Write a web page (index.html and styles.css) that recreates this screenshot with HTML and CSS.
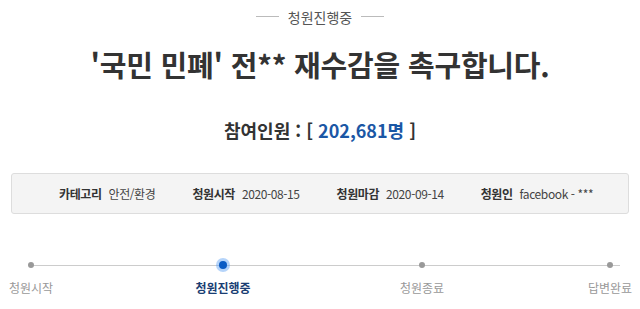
FILE: index.html
```html
<!DOCTYPE html>
<html lang="ko">
<head>
  <meta charset="UTF-8" />
  <meta name="viewport" content="width=device-width, initial-scale=1" />
  <title>청원진행중</title>
  <link rel="stylesheet" href="styles.css">
</head>
<body>
  <div class="petition">
    <div class="status"><span class="status-text">청원진행중</span></div>
    <h1 class="title">'국민 민폐' 전** 재수감을 촉구합니다.</h1>
    <h2 class="count">참여인원 : [ <span class="count-num">202,681명</span> ]</h2>

    <ul class="info">
      <li><strong>카테고리</strong> 안전/환경</li>
      <li><strong>청원시작</strong> 2020-08-15</li>
      <li><strong>청원마감</strong> 2020-09-14</li>
      <li><strong>청원인</strong> facebook - ***</li>
    </ul>

    <div class="progress">
      <div class="progress-line"></div>
      <div class="step">
        <span class="dot"></span>
        <span class="step-label">청원시작</span>
      </div>
      <div class="step active">
        <span class="dot"></span>
        <span class="step-label">청원진행중</span>
      </div>
      <div class="step">
        <span class="dot"></span>
        <span class="step-label">청원종료</span>
      </div>
      <div class="step">
        <span class="dot"></span>
        <span class="step-label">답변완료</span>
      </div>
    </div>
  </div>
</body>
</html>
```

FILE: styles.css
```css
* {
  box-sizing: border-box;
  margin: 0;
  padding: 0;
}
body, html {
  width: 100%;
  height: 100%;
  background-color: #fff;
  font-family: "Noto Sans CJK KR", "Noto Sans", sans-serif;
  color: #333;
  overflow: hidden;
}
.petition {
  padding: 0 11px;
}
.status {
  display: flex;
  justify-content: center;
  padding-top: 5px;
  height: 28px;
}
.status-text {
  display: flex;
  align-items: center;
  gap: 9px;
  font-size: 14px;
  line-height: 20px;
  color: #555;
}
.status-text::before,
.status-text::after {
  content: "";
  width: 23px;
  height: 1px;
  background-color: #bbb;
}
.title {
  text-align: center;
  font-size: 29px;
  font-weight: bold;
  line-height: 40px;
  margin-top: 16px;
  color: #333;
  letter-spacing: -0.2px;
}
.count {
  text-align: center;
  font-size: 18px;
  font-weight: bold;
  line-height: 26px;
  margin-top: 33px;
  color: #333;
}
.count-num {
  color: #1b57a5;
}
.info {
  list-style: none;
  display: flex;
  align-items: center;
  gap: 37px;
  height: 41px;
  margin-top: 30px;
  padding-left: 47px;
  background-color: #f4f4f4;
  border: 1px solid #ddd;
  border-radius: 3px;
  font-size: 12px;
  letter-spacing: -0.4px;
  color: #444;
}
.info li {
  white-space: nowrap;
}
.info li strong {
  margin-right: 4px;
  color: #333;
}
.progress {
  position: relative;
  display: flex;
  margin-top: 40px;
}
.progress-line {
  position: absolute;
  top: 11px;
  left: 20px;
  right: 9px;
  height: 1px;
  background-color: #ccc;
}
.step {
  position: relative;
  display: flex;
  flex-direction: column;
  align-items: center;
  width: 40px;
}
.step:nth-child(3) {
  margin-left: 152px;
}
.step:nth-child(4) {
  margin-left: 159px;
}
.step:nth-child(5) {
  margin-left: 148px;
}
.dot {
  width: 6px;
  height: 6px;
  margin-top: 8px;
  border-radius: 50%;
  background-color: #999;
}
.step-label {
  margin-top: 11px;
  font-size: 12px;
  line-height: 18px;
  color: #999;
  white-space: nowrap;
}
.step.active .dot {
  width: 8px;
  height: 8px;
  margin-top: 7px;
  background-color: #0a5bc4;
  box-shadow: 0 0 0 3px rgba(90, 160, 245, 0.45);
}
.step.active .step-label {
  margin-top: 10px;
  font-weight: bold;
  color: #1a3e73;
}
```
